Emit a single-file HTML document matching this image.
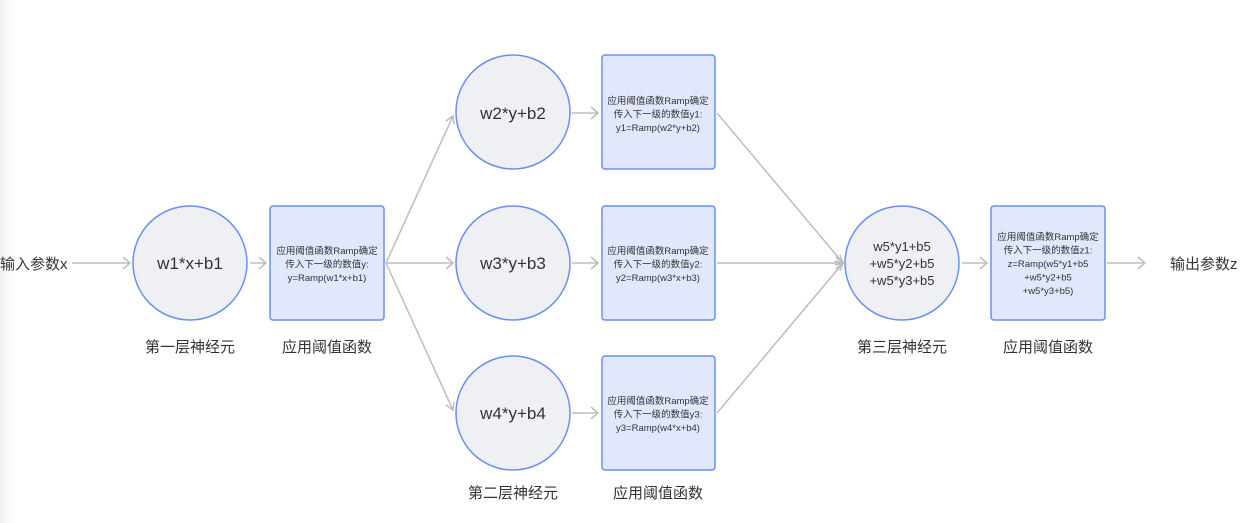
<!DOCTYPE html>
<html><head><meta charset="utf-8"><style>
html,body{margin:0;padding:0;background:#fff}
body{width:1240px;height:523px;overflow:hidden;position:relative}
svg{position:absolute;left:0;top:0}
text{font-family:"Liberation Sans","Noto Sans CJK SC",sans-serif;fill:#333}
</style></head><body>
<svg width="1240" height="523" viewBox="0 0 1240 523">
<defs>
<linearGradient id="g" x1="0" x2="1"><stop offset="0" stop-color="#f0f0f0"/><stop offset="1" stop-color="#fff"/></linearGradient>
</defs>
<rect x="0" y="0" width="14" height="523" fill="url(#g)"/>
<g stroke="#bdbdbd" stroke-width="1.5" fill="none">
<path d="M72 263H130M123 257l7 6-7 6"/>
<path d="M250 263H266M259 257l7 6-7 6"/>
<path d="M386 263L453 116M446 121l7-5 1 8"/>
<path d="M386 263H453M446 257l7 6-7 6"/>
<path d="M386 263L453 410M446 405l7 5 1-8"/>
<path d="M572 113H598M591 107l7 6-7 6"/>
<path d="M572 263H598M591 257l7 6-7 6"/>
<path d="M572 413H598M591 407l7 6-7 6"/>
<path d="M717 113L843 263M840 255l3 8-8-2"/>
<path d="M717 263H843M836 257l7 6-7 6"/>
<path d="M717 413L843 263M835 265l8-2-3 8"/>
<path d="M962 263H987M980 257l7 6-7 6"/>
<path d="M1107 263H1145M1138 257l7 6-7 6"/>
</g>
<g fill="#eff0f3" stroke="#6a8ff0" stroke-width="1.5">
<circle cx="190" cy="263" r="57"/>
<circle cx="513" cy="112" r="57"/>
<circle cx="513" cy="263" r="57"/>
<circle cx="513" cy="413" r="57"/>
<circle cx="902" cy="263" r="57"/>
</g>
<g fill="#e1e8fb" stroke="#6a8ff0" stroke-width="1.5">
<rect x="270" y="206" width="114" height="114" rx="3"/>
<rect x="602" y="55" width="113" height="114" rx="3"/>
<rect x="602" y="206" width="113" height="114" rx="3"/>
<rect x="602" y="356" width="113" height="114" rx="3"/>
<rect x="991" y="206" width="114" height="114" rx="3"/>
</g>
<g font-size="17" text-anchor="middle">
<text x="190" y="269">w1*x+b1</text>
<text x="513" y="119">w2*y+b2</text>
<text x="513" y="269">w3*y+b3</text>
<text x="513" y="419">w4*y+b4</text>
</g>
<g font-size="13" text-anchor="middle">
<text x="902" y="251">w5*y1+b5</text>
<text x="902" y="268">+w5*y2+b5</text>
<text x="902" y="285">+w5*y3+b5</text>
</g>
<g font-size="9.5" text-anchor="middle">
<text x="327" y="254">应用阈值函数Ramp确定</text><text x="327" y="267.5">传入下一级的数值y:</text><text x="327" y="281">y=Ramp(w1*x+b1)</text>
<text x="658" y="104">应用阈值函数Ramp确定</text><text x="658" y="117.5">传入下一级的数值y1:</text><text x="658" y="131">y1=Ramp(w2*y+b2)</text>
<text x="658" y="254">应用阈值函数Ramp确定</text><text x="658" y="267.5">传入下一级的数值y2:</text><text x="658" y="281">y2=Ramp(w3*x+b3)</text>
<text x="658" y="404">应用阈值函数Ramp确定</text><text x="658" y="417.5">传入下一级的数值y3:</text><text x="658" y="431">y3=Ramp(w4*x+b4)</text>
<text x="1048" y="240">应用阈值函数Ramp确定</text><text x="1048" y="253.5">传入下一级的数值z1:</text><text x="1048" y="267">z=Ramp(w5*y1+b5</text><text x="1048" y="280.5">+w5*y2+b5</text><text x="1048" y="294">+w5*y3+b5)</text>
</g>
<g font-size="15">
<text x="0" y="269">输入参数x</text>
<text x="1170" y="269">输出参数z</text>
</g>
<g font-size="15" text-anchor="middle">
<text x="190" y="352">第一层神经元</text>
<text x="327" y="352">应用阈值函数</text>
<text x="513" y="498">第二层神经元</text>
<text x="658" y="498">应用阈值函数</text>
<text x="902" y="352">第三层神经元</text>
<text x="1048" y="352">应用阈值函数</text>
</g>
</svg>
</body></html>
